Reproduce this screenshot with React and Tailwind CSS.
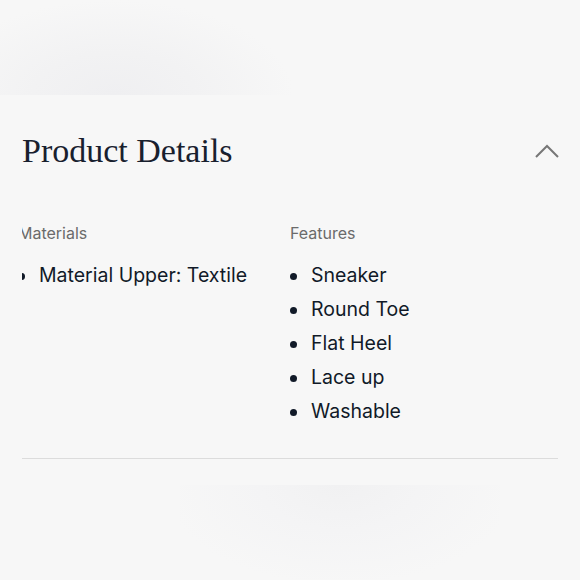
export default function App() {
    const materials = ['Material Upper: Textile'];
    const features = ['Sneaker', 'Round Toe', 'Flat Heel', 'Lace up', 'Washable'];

    return (
        <div className="w-[580px] h-[580px] overflow-hidden bg-[#f7f7f7]" style={{ fontFamily: 'Inter, "Liberation Sans", sans-serif' }}>
            {/* faded image edge above */}
            <div className="h-[95px] w-[300px] bg-[radial-gradient(ellipse_60%_100%_at_38%_100%,#efeff1_0%,#f2f2f3_45%,#f7f7f7_100%)]"></div>

            <div className="px-[22px]">
                <div className="flex justify-between pt-[36px] h-[126px] items-start">
                    <h2 className="text-[34px] leading-[40px] text-[#18202e]" style={{ fontFamily: '"Liberation Serif", serif' }}>
                        Product Details
                    </h2>
                    <svg width="24" height="14" viewBox="0 0 24 14" className="mt-[13px] mr-[-1px]">
                        <polyline points="1,13 12,2 23,13" fill="none" stroke="#777" strokeWidth="2" />
                    </svg>
                </div>

                <div className="grid grid-cols-2 pb-[29px] border-b border-[#dcdcdc]">
                    <div className="overflow-hidden">
                        <div className="ml-[-4px]">
                            <p className="text-[16px] leading-[24px] text-[#6b6b6b]">Materials</p>
                            <ul className="mt-[14px]">
                                {materials.map((m) => (
                                    <li key={m} className="flex items-center h-[34px] text-[19.5px] text-[#111a28]">
                                        <span className="w-[7px] h-[7px] rounded-full bg-[#111a28] mr-[14px]"></span>
                                        {m}
                                    </li>
                                ))}
                            </ul>
                        </div>
                    </div>
                    <div>
                        <p className="text-[16px] leading-[24px] text-[#6b6b6b]">Features</p>
                        <ul className="mt-[14px]">
                            {features.map((f) => (
                                <li key={f} className="flex items-center h-[34px] text-[19.5px] text-[#111a28]">
                                    <span className="w-[7px] h-[7px] rounded-full bg-[#111a28] mr-[14px]"></span>
                                    {f}
                                </li>
                            ))}
                        </ul>
                    </div>
                </div>
            </div>

            {/* faded image edge below */}
            <div className="ml-[180px] mt-[26px] h-[100px] w-[320px] bg-[radial-gradient(ellipse_55%_100%_at_50%_0%,#f1f1f2_0%,#f4f4f5_45%,#f7f7f7_100%)]"></div>
        </div>
    );
}
